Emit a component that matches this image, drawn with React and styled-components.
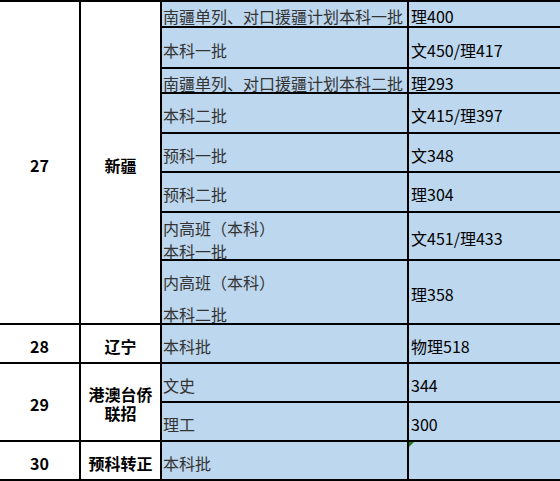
import React from "react";
import styled, { css, createGlobalStyle } from "styled-components";

const GlobalStyle = createGlobalStyle`
  html, body {
    margin: 0;
    padding: 0;
    background: #ffffff;
  }
  body {
    font-family: "Noto Sans CJK SC", "Noto Sans", sans-serif;
  }
`;

// 表格：黑色背景 + 2px 间隙 = 网格线
const Sheet = styled.div`
  display: grid;
  grid-template-columns: 79px 79px 245px 1fr;
  grid-template-rows: 24px 39px 23px 38px 37px 38px 46px 62px 37px 37px 37px 37px;
  gap: 2px;
  padding: 2px 0;
  width: 560px;
  background: #000;
`;

const cellBase = css`
  position: relative;
  display: flex;
  flex-direction: column;
  justify-content: center;
  grid-row: ${(p) => p.$row};
  box-sizing: border-box;
  font-size: 16px;
  white-space: nowrap;
`;

// 序号列
const NoCell = styled.div`
  ${cellBase}
  grid-column: 1;
  align-items: center;
  padding-top: 4px;
  background: #ffffff;
  color: #000;
  font-weight: 700;
  line-height: 20px;
`;

// 省份列
const ProvinceCell = styled.div`
  ${cellBase}
  grid-column: 2;
  align-items: center;
  padding-top: 4px;
  background: #ffffff;
  color: #000;
  font-weight: 700;
  line-height: ${(p) => p.$lh || 20}px;
  text-align: center;
`;

// 批次列
const BatchCell = styled.div`
  ${cellBase}
  grid-column: 3;
  align-items: flex-start;
  padding: ${(p) => p.$shift || 4}px 0 0 1px;
  background: #bdd7ee;
  color: #333;
  line-height: ${(p) => p.$lh || 20}px;
`;

// 分数线列
const ScoreCell = styled.div`
  ${cellBase}
  grid-column: 4;
  align-items: flex-start;
  padding: 4px 0 0 2px;
  background: #bdd7ee;
  color: #000;
  line-height: 20px;
`;

const Line = styled.span`
  display: block;
`;

// 绿色小三角（单元格提示）
const Marker = styled.span`
  position: absolute;
  top: 0;
  left: 0;
  width: 0;
  height: 0;
  border-top: 5px solid #1b7d1b;
  border-right: 5px solid transparent;
`;

const rows = [
  { name: ["南疆单列、对口援疆计划本科一批"], score: "理400" },
  { name: ["本科一批"], score: "文450/理417" },
  { name: ["南疆单列、对口援疆计划本科二批"], score: "理293" },
  { name: ["本科二批"], score: "文415/理397" },
  { name: ["预科一批"], score: "文348" },
  { name: ["预科二批"], score: "理304" },
  { name: ["内高班（本科）", "本科一批"], score: "文451/理433", lh: 23, shift: 8 },
  { name: ["内高班（本科）", "本科二批"], score: "理358", lh: 32, shift: 12 },
  { name: ["本科批"], score: "物理518" },
  { name: ["文史"], score: "344" },
  { name: ["理工"], score: "300" },
  { name: ["本科批"], score: "", marker: true },
];

const provinces = [
  { no: "27", name: ["新疆"], row: "1 / 9" },
  { no: "28", name: ["辽宁"], row: "9 / 10" },
  { no: "29", name: ["港澳台侨", "联招"], row: "10 / 12", lh: 19 },
  { no: "30", name: ["预科转正"], row: "12 / 13" },
];

export default function App() {
  return (
    <>
      <GlobalStyle />
      <Sheet>
        {provinces.map((p) => (
          <React.Fragment key={p.no}>
            <NoCell $row={p.row}>{p.no}</NoCell>
            <ProvinceCell $row={p.row} $lh={p.lh}>
              {p.name.map((n) => (
                <Line key={n}>{n}</Line>
              ))}
            </ProvinceCell>
          </React.Fragment>
        ))}
        {rows.map((r, i) => {
          const row = `${i + 1} / ${i + 2}`;
          return (
            <React.Fragment key={i}>
              <BatchCell $row={row} $lh={r.lh} $shift={r.shift}>
                {r.name.map((n) => (
                  <Line key={n}>{n}</Line>
                ))}
              </BatchCell>
              <ScoreCell $row={row}>
                {r.score}
                {r.marker && <Marker />}
              </ScoreCell>
            </React.Fragment>
          );
        })}
      </Sheet>
    </>
  );
}
